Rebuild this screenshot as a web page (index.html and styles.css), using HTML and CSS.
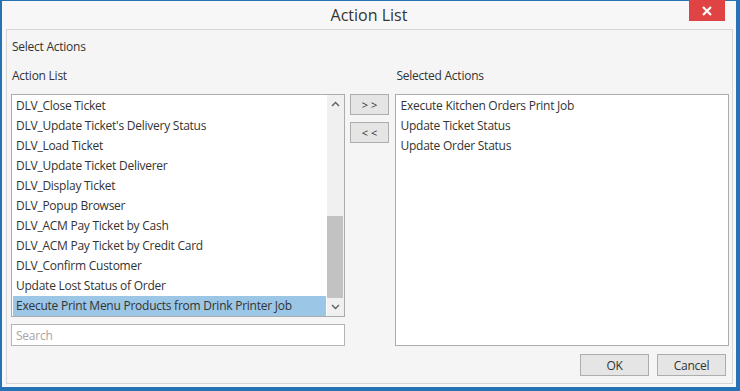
FILE: index.html
```html
<!DOCTYPE html>
<html lang="en">
<head>
    <meta charset="UTF-8">
    <title>Action List</title>
    <link rel="stylesheet" href="styles.css">
</head>
<body>
    <div class="window">
        <div class="titlebar">
            <span class="title">Action List</span>
            <button class="close" type="button">
                <svg width="10" height="10" viewBox="0 0 10 10"><path d="M1 1 L9 9 M9 1 L1 9" stroke="#fff" stroke-width="2.2"/></svg>
            </button>
        </div>

        <div class="panel">
            <div class="caption">Select Actions</div>

            <div class="columns">
                <!-- left: available actions -->
                <div class="col">
                    <div class="label">Action List</div>
                    <div class="listbox short">
                        <ul class="items">
                            <li>DLV_Close Ticket</li>
                            <li>DLV_Update Ticket's Delivery Status</li>
                            <li>DLV_Load Ticket</li>
                            <li>DLV_Update Ticket Deliverer</li>
                            <li>DLV_Display Ticket</li>
                            <li>DLV_Popup Browser</li>
                            <li>DLV_ACM Pay Ticket by Cash</li>
                            <li>DLV_ACM Pay Ticket by Credit Card</li>
                            <li>DLV_Confirm Customer</li>
                            <li>Update Lost Status of Order</li>
                            <li class="selected">Execute Print Menu Products from Drink Printer Job</li>
                        </ul>
                        <div class="scrollbar">
                            <div class="arrow">
                                <svg width="9" height="6" viewBox="0 0 9 6"><path d="M1 5 L4.5 1.5 L8 5" fill="none" stroke="#606060" stroke-width="1.4"/></svg>
                            </div>
                            <div class="track"><div class="thumb"></div></div>
                            <div class="arrow">
                                <svg width="9" height="6" viewBox="0 0 9 6"><path d="M1 1 L4.5 4.5 L8 1" fill="none" stroke="#606060" stroke-width="1.4"/></svg>
                            </div>
                        </div>
                    </div>
                    <input class="search" type="text" placeholder="Search">
                </div>

                <!-- middle: move buttons -->
                <div class="movers">
                    <button class="move" type="button">&gt; &gt;</button>
                    <button class="move" type="button">&lt; &lt;</button>
                </div>

                <!-- right: selected actions -->
                <div class="col">
                    <div class="label">Selected Actions</div>
                    <div class="listbox tall">
                        <ul class="items">
                            <li>Execute Kitchen Orders Print Job</li>
                            <li>Update Ticket Status</li>
                            <li>Update Order Status</li>
                        </ul>
                    </div>
                </div>
            </div>

            <div class="footer">
                <button class="btn" type="button">OK</button>
                <button class="btn" type="button">Cancel</button>
            </div>
        </div>
    </div>
</body>
</html>
```

FILE: styles.css
```css
* {
    margin: 0;
    padding: 0;
    box-sizing: border-box;
}

body {
    width: 740px;
    height: 391px;
    font-family: "Open Sans", "Noto Sans", sans-serif;
    font-size: 12px;
    letter-spacing: -0.25px;
    color: #333;
    background: #f7f7f7;
}

.window {
    width: 740px;
    height: 391px;
    display: flex;
    flex-direction: column;
    border: 2px solid #2771b5;
    border-top-width: 1px;
    border-right-width: 4px;
    border-bottom-width: 4px;
    background: #f7f7f7;
}

.titlebar {
    position: relative;
    height: 28px;
    display: flex;
    align-items: center;
    justify-content: center;
}

.title {
    font-size: 16px;
    letter-spacing: 0;
    color: #333;
}

.close {
    position: absolute;
    top: -1px;
    right: 11px;
    width: 36px;
    height: 21px;
    border: none;
    background: #e04343;
    display: flex;
    align-items: center;
    justify-content: center;
}

.panel {
    flex: 1;
    margin: 0 3px 3px 4px;
    border: 1px solid #d6d6d6;
    background: #f5f5f5;
    padding: 8px 3px 0 4px;
    display: flex;
    flex-direction: column;
}

.caption {
    line-height: 17px;
    padding-left: 1px;
}

.columns {
    display: flex;
    gap: 5px;
    margin-top: 12px;
}

.col {
    width: 334px;
    display: flex;
    flex-direction: column;
}

.col:last-child {
    margin-left: 1px;
}

.label {
    line-height: 17px;
    padding-left: 1px;
    margin-bottom: 10px;
}

.listbox {
    position: relative;
    border: 1px solid #acacac;
    background: #fff;
    display: flex;
}

.listbox.short {
    height: 223px;
}

.listbox.tall {
    height: 252px;
}

.items {
    list-style: none;
    flex: 1;
    padding: 1px 1px 0 1px;
}

.items li {
    height: 20px;
    line-height: 20px;
    padding-left: 3px;
    white-space: nowrap;
}

.items li.selected {
    background: #9bc6e6;
}

.scrollbar {
    width: 17px;
    background: #f0f0f0;
    display: flex;
    flex-direction: column;
}

.arrow {
    height: 18px;
    display: flex;
    align-items: center;
    justify-content: center;
}

.track {
    flex: 1;
    display: flex;
    flex-direction: column;
    justify-content: flex-end;
}

.thumb {
    height: 82px;
    margin: 0 1px 0 0;
    background: #c2c2c2;
}

.search {
    margin-top: 7px;
    height: 22px;
    border: 1px solid #b4b4b4;
    background: #fff;
    padding-left: 4px;
    font-family: inherit;
    font-size: 12px;
    letter-spacing: inherit;
    color: #333;
}

.search::placeholder {
    color: #a6a6a6;
}

.movers {
    width: 40px;
    padding-top: 27px;
    display: flex;
    flex-direction: column;
    gap: 7px;
}

.move {
    height: 21px;
    border: 1px solid #adadad;
    background: #e5e5e5;
    font-family: inherit;
    font-size: 11px;
    color: #333;
}

.footer {
    display: flex;
    justify-content: flex-end;
    gap: 8px;
    padding: 8px 3px 0 0;
}

.btn {
    width: 69px;
    height: 22px;
    border: 1px solid #adadad;
    background: #e5e5e5;
    font-family: inherit;
    font-size: 12px;
    letter-spacing: inherit;
    color: #333;
}
```
